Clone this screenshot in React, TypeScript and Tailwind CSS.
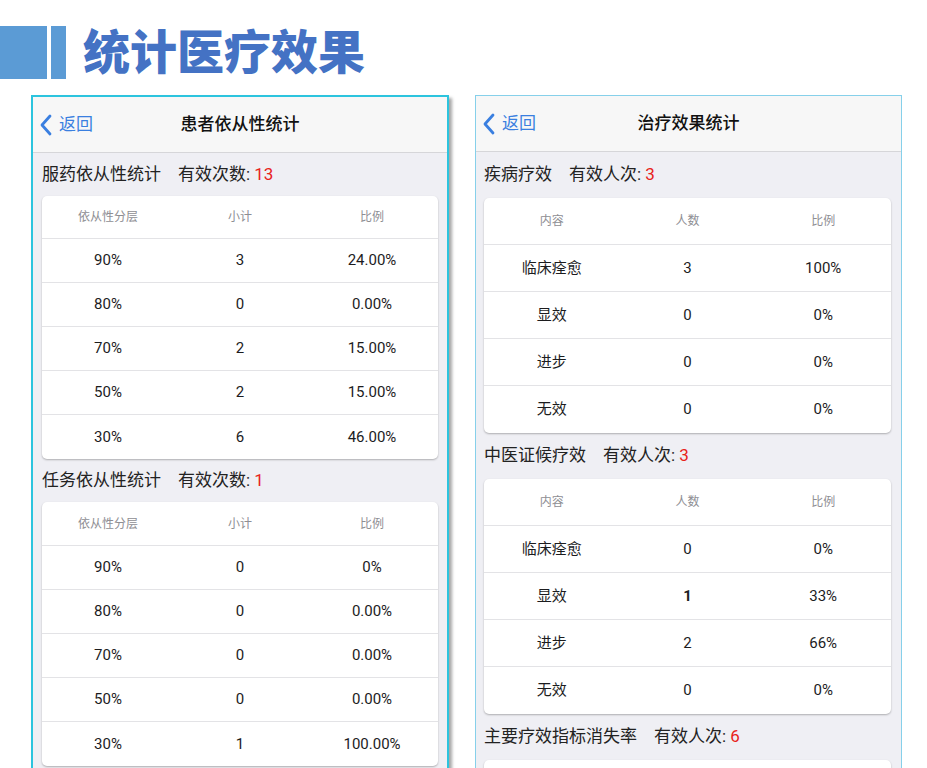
import React from 'react';

type Row = { label: string; count: string; ratio: string; bold?: boolean };

const ChevronLeft = () => (
  <svg width="12" height="22" viewBox="0 0 12 22" fill="none">
    <path d="M10 2 L2 11 L10 20" stroke="currentColor" strokeWidth="2.8" strokeLinecap="round" strokeLinejoin="round" />
  </svg>
);

function NavBar({ title }: { title: string }) {
  return (
    <div className="relative h-[56px] shrink-0 bg-[#f7f7f7] border-b border-[#d6d6d9] flex items-center justify-center">
      <div className="absolute left-[7px] top-0 h-full flex items-center gap-[7px] text-[#3a7fe0]">
        <ChevronLeft />
        <span className="text-[17px]">返回</span>
      </div>
      <span className="text-[17px] font-medium text-[#111]">{title}</span>
    </div>
  );
}

function StatTable({
  heads,
  rows,
  headH,
  rowH,
}: {
  heads: string[];
  rows: Row[];
  headH: string;
  rowH: string;
}) {
  return (
    <div className="bg-white rounded-[5px] shadow-[0_1px_2px_rgba(0,0,0,0.28)] overflow-hidden">
      <div className={`grid grid-cols-3 items-center border-b border-[#e3e3e6] ${headH}`}>
        {heads.map((h) => (
          <span key={h} className="text-center text-[12px] text-[#8e8e93]">
            {h}
          </span>
        ))}
      </div>
      {rows.map((r, idx) => (
        <div
          key={idx}
          className={`grid grid-cols-3 items-center text-[15px] text-[#1c1c1e] ${rowH} ${
            idx < rows.length - 1 ? 'border-b border-[#e3e3e6]' : ''
          }`}
        >
          <span className="text-center">{r.label}</span>
          <span className={`text-center ${r.bold ? 'font-bold' : ''}`}>{r.count}</span>
          <span className="text-center">{r.ratio}</span>
        </div>
      ))}
    </div>
  );
}

function SectionTitle({ name, metric, value, h }: { name: string; metric: string; value: string; h: string }) {
  return (
    <div className={`flex items-center text-[17px] text-[#222] ${h}`}>
      <span>{name}</span>
      <span className="ml-[17px]">{metric}: </span>
      <span className="text-[#e8221b] ml-[4px]">{value}</span>
    </div>
  );
}

export default function App() {
  const adherence1: Row[] = [
    { label: '90%', count: '3', ratio: '24.00%' },
    { label: '80%', count: '0', ratio: '0.00%' },
    { label: '70%', count: '2', ratio: '15.00%' },
    { label: '50%', count: '2', ratio: '15.00%' },
    { label: '30%', count: '6', ratio: '46.00%' },
  ];
  const adherence2: Row[] = [
    { label: '90%', count: '0', ratio: '0%' },
    { label: '80%', count: '0', ratio: '0.00%' },
    { label: '70%', count: '0', ratio: '0.00%' },
    { label: '50%', count: '0', ratio: '0.00%' },
    { label: '30%', count: '1', ratio: '100.00%' },
  ];
  const disease: Row[] = [
    { label: '临床痊愈', count: '3', ratio: '100%' },
    { label: '显效', count: '0', ratio: '0%' },
    { label: '进步', count: '0', ratio: '0%' },
    { label: '无效', count: '0', ratio: '0%' },
  ];
  const tcm: Row[] = [
    { label: '临床痊愈', count: '0', ratio: '0%' },
    { label: '显效', count: '1', ratio: '33%', bold: true },
    { label: '进步', count: '2', ratio: '66%' },
    { label: '无效', count: '0', ratio: '0%' },
  ];

  return (
    <div
      className="w-[927px] h-[768px] bg-white overflow-hidden flex flex-col"
      style={{ fontFamily: 'Roboto, "Noto Sans CJK SC", "Noto Sans", sans-serif' }}
    >
      {/* Title */}
      <div className="flex items-center h-[53px] mt-[26px] shrink-0">
        <div className="w-[47px] h-[53px] bg-[#5b9bd5]" />
        <div className="w-[15px] h-[53px] bg-[#5b9bd5] ml-[4px]" />
        <h1 className="ml-[17px] text-[47px] leading-none font-black text-[#4472c4]">统计医疗效果</h1>
      </div>

      <div className="flex items-start pl-[31px] gap-[26px] mt-[16px]">
        {/* Left phone */}
        <div className="w-[418px] h-[680px] border-2 border-[#2cc4de] bg-[#efeff4] shadow-[3px_3px_3px_rgba(0,0,0,0.35)] flex flex-col overflow-hidden">
          <NavBar title="患者依从性统计" />
          <div className="px-[9px]">
            <SectionTitle name="服药依从性统计" metric="有效次数" value="13" h="h-[43px]" />
            <StatTable heads={['依从性分层', '小计', '比例']} rows={adherence1} headH="h-[43px]" rowH="h-[44px]" />
            <SectionTitle name="任务依从性统计" metric="有效次数" value="1" h="h-[43px]" />
            <StatTable heads={['依从性分层', '小计', '比例']} rows={adherence2} headH="h-[44px]" rowH="h-[44px]" />
          </div>
        </div>

        {/* Right phone */}
        <div className="w-[427px] h-[680px] border border-[#86d0ea] bg-[#efeff4] flex flex-col overflow-hidden">
          <NavBar title="治疗效果统计" />
          <div className="pl-[8px] pr-[10px]">
            <SectionTitle name="疾病疗效" metric="有效人次" value="3" h="h-[46px]" />
            <StatTable heads={['内容', '人数', '比例']} rows={disease} headH="h-[47px]" rowH="h-[47px]" />
            <SectionTitle name="中医证候疗效" metric="有效人次" value="3" h="h-[46px]" />
            <StatTable heads={['内容', '人数', '比例']} rows={tcm} headH="h-[47px]" rowH="h-[47px]" />
            <SectionTitle name="主要疗效指标消失率" metric="有效人次" value="6" h="h-[46px]" />
            {/* third table only shows its top edge */}
            <div className="h-[47px] bg-white rounded-[5px] shadow-[0_1px_2px_rgba(0,0,0,0.28)]" />
          </div>
        </div>
      </div>
    </div>
  );
}
